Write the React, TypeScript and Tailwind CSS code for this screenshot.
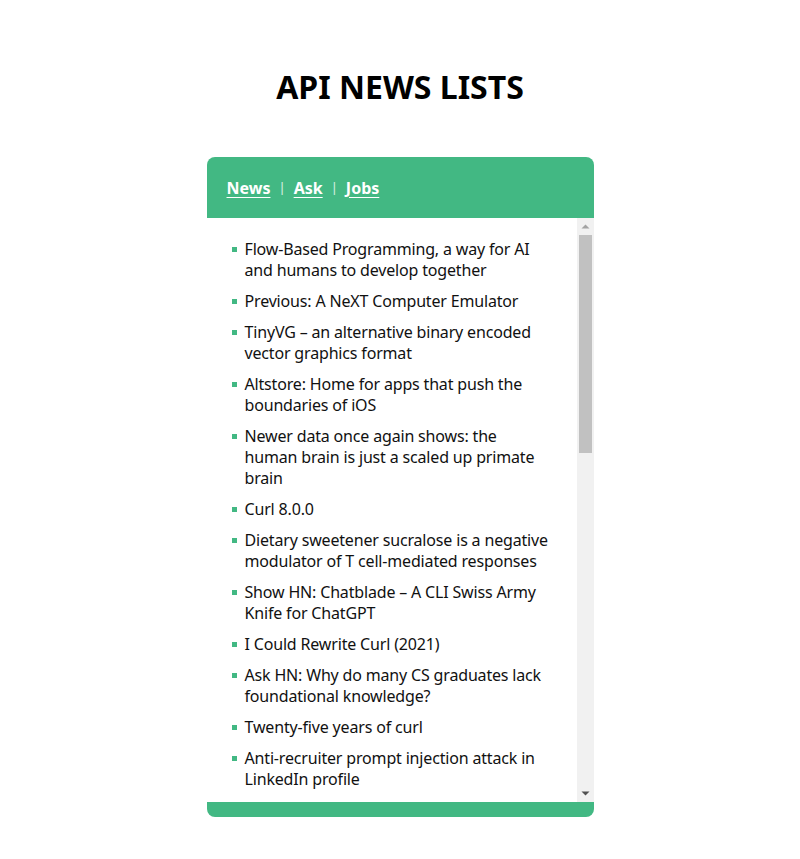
import React from "react";

const stories: string[] = [
  "Flow-Based Programming, a way for AI and humans to develop together",
  "Previous: A NeXT Computer Emulator",
  "TinyVG – an alternative binary encoded vector graphics format",
  "Altstore: Home for apps that push the boundaries of iOS",
  "Newer data once again shows: the human brain is just a scaled up primate brain",
  "Curl 8.0.0",
  "Dietary sweetener sucralose is a negative modulator of T cell-mediated responses",
  "Show HN: Chatblade – A CLI Swiss Army Knife for ChatGPT",
  "I Could Rewrite Curl (2021)",
  "Ask HN: Why do many CS graduates lack foundational knowledge?",
  "Twenty-five years of curl",
  "Anti-recruiter prompt injection attack in LinkedIn profile",
  "GPT-4 Designed a Programming Language",
  "The Rise and Fall of the Sega Dreamcast",
  "Show HN: A fully open-source (Apache 2.0) implementation of Llama",
  "Why I'm not worried about AI taking my job",
  "The Debian 12 bookworm freeze has started",
  "Modern CSS for dynamic component-based architecture",
  "A kernel lesson in how not to write a scheduler",
  "Ask HN: What are you working on this weekend?",
  "How to build a small static site generator in Go",
  "Launch HN: Vocode (YC W23) – Library for voice conversation with LLMs",
  "The surprising history of the humble spreadsheet",
  "Bing Chat now supports image creation",
];

const tabs = ["News", "Ask", "Jobs"];

// windows-ish scrollbar, drawn
function FakeScrollbar() {
  return (
    <div className="w-[17px] shrink-0 bg-[#f1f1f1] flex flex-col items-center">
      <svg width="17" height="17" viewBox="0 0 17 17" className="shrink-0">
        <path d="M4.5 10.5 L8.5 6.5 L12.5 10.5 Z" fill="#a3a3a3" />
      </svg>
      <div className="w-[13px] h-[218px] bg-[#c1c1c1]" />
      <div className="flex-1" />
      <svg width="17" height="17" viewBox="0 0 17 17" className="shrink-0">
        <path d="M4.5 6.5 L12.5 6.5 L8.5 10.5 Z" fill="#505050" />
      </svg>
    </div>
  );
}

export default function App() {
  return (
    <div
      className="min-h-screen bg-white flex flex-col items-center text-black"
      style={{ fontFamily: '"Noto Sans", "Noto Sans CJK KR", sans-serif' }}
    >
      <h1 className="mt-[64px] text-[32px] leading-[46px] font-bold">
        API NEWS LISTS
      </h1>

      <div className="mt-[47px] w-[387px] rounded-[8px] overflow-hidden bg-[#42b883] flex flex-col">
        {/* tab bar */}
        <nav className="h-[61px] flex items-center pl-[20px] text-white text-[16px] font-bold">
          {tabs.map((t, i) => (
            <React.Fragment key={t}>
              {i > 0 && (
                <span className="mx-[8px] font-normal text-[13px] text-white/80">|</span>
              )}
              <a href="#" className="underline underline-offset-[3px]">
                {t}
              </a>
            </React.Fragment>
          ))}
        </nav>

        <div className="h-[584px] bg-white flex">
          <div className="flex-1 overflow-y-auto [scrollbar-width:none]">
            <ul className="pl-[25px] pr-[26px] pt-[21px] pb-[12px] text-[16px] leading-[21px] tracking-[-0.17px] text-[#111]">
              {stories.map((s, i) => (
                <li key={i} className="mb-[10px] flex">
                  <span className="w-[5px] h-[5px] bg-[#42b883] mt-[8px] mr-[8px] shrink-0" />
                  <span>{s}</span>
                </li>
              ))}
            </ul>
          </div>
          <FakeScrollbar />
        </div>

        <div className="h-[15px]" />
      </div>
    </div>
  );
}
